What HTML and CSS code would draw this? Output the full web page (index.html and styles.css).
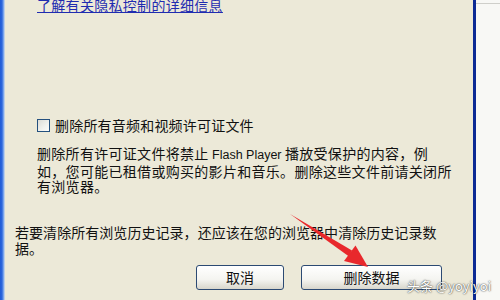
FILE: index.html
```html
<!DOCTYPE html>
<html>
<head>
<meta charset="utf-8">
<link rel="stylesheet" href="styles.css">
</head>
<body>
<div class="screen">
  <div class="edge-left"></div>
  <div class="dialog">
    <div class="group">
      <div class="link-row"><a class="link" href="#">了解有关隐私控制的详细信息</a></div>
      <label class="check-row"><span class="checkbox"></span><span>删除所有音频和视频许可证文件</span></label>
      <p class="note">删除所有许可证文件将禁止 <span class="latin">Flash Player</span> 播放受保护的内容，例<br>如，您可能已租借或购买的影片和音乐。删除这些文件前请关闭所<br>有浏览器。</p>
    </div>
    <p class="footer-note">若要清除所有浏览历史记录，还应该在您的浏览器中清除历史记录数<br>据。</p>
    <div class="buttons">
      <button class="btn btn-cancel">取消</button>
      <button class="btn btn-delete">删除数据</button>
    </div>
  </div>
  <div class="edge-dark"></div>
  <div class="side-pane"><div class="side-line"></div></div>

  <svg class="arrow" width="500" height="300" viewBox="0 0 500 300">
    <polygon points="290,214 352,250.5 349,256.5" fill="#e8282c"/>
    <polygon points="368,267 344,261 355.5,245.5" fill="#e8282c"/>
  </svg>
  <div class="watermark">头条 @yoyiyoi</div>
</div>
</body>
</html>
```

FILE: styles.css
```css
html, body {
  margin: 0;
  padding: 0;
}
body {
  width: 500px;
  height: 300px;
  overflow: hidden;
  font-family: "Noto Sans CJK SC", "Liberation Sans", sans-serif;
  font-size: 14px;
  color: #111;
}
.screen {
  position: relative;
  display: flex;
  width: 500px;
  height: 300px;
}
.edge-left {
  width: 5px;
  background: linear-gradient(to right, #1f5bd6 0, #2d66dc 2px, #7aa5ec 3.5px, #dfe4e6 5px);
}
.dialog {
  width: 468px;
  background: #ece9d8;
  padding-left: 10px;
  box-sizing: border-box;
  display: flex;
  flex-direction: column;
}
.group {
  padding-left: 22px;
}
.link-row {
  height: 16px;
  line-height: 16px;
  margin-top: -3px;
}
.link {
  color: #1f2cb0;
  text-decoration: underline;
  letter-spacing: 0.3px;
}
.check-row {
  display: flex;
  align-items: center;
  gap: 5px;
  height: 16px;
  margin-top: 104px;
  letter-spacing: 0.2px;
}
.checkbox {
  width: 13px;
  height: 13px;
  box-sizing: border-box;
  border: 1px solid #24507e;
  background: linear-gradient(135deg, #dcdcd6 0, #f2f2ee 60%, #fbfbfa 100%);
}
.note {
  margin: 13px 0 0 0;
  line-height: 15.5px;
  letter-spacing: 0.3px;
}
.latin {
  font-family: "Liberation Sans", sans-serif;
  font-size: 12.5px;
  letter-spacing: 0;
}
.footer-note {
  margin: 29px 0 0 0;
  line-height: 16px;
  letter-spacing: 0.05px;
}
.buttons {
  display: flex;
  justify-content: flex-end;
  gap: 17px;
  margin-top: 9px;
  padding-right: 31px;
}
.btn {
  height: 25px;
  border: 1px solid #2c4a73;
  border-radius: 3px;
  background: linear-gradient(to bottom, #ffffff 0, #f4f4f0 60%, #d8d6cc 100%);
  font-family: "Noto Sans CJK SC", sans-serif;
  font-size: 14px;
  color: #111;
  padding: 0;
  box-sizing: border-box;
}
.btn-cancel {
  width: 88px;
}
.btn-delete {
  width: 141px;
}
.edge-dark {
  width: 3px;
  background: #0c2a94;
}
.side-pane {
  flex: 1;
  background: #f8f8f5;
}
.side-line {
  margin-top: 3px;
  height: 1px;
  background: #cfcfca;
}
.arrow {
  position: absolute;
  left: 0;
  top: 0;
  pointer-events: none;
}
.watermark {
  position: absolute;
  left: 407px;
  top: 276px;
  color: #ffffff;
  font-size: 13px;
  text-shadow: 0 0 2px rgba(0,0,0,0.6), 0 0 1px rgba(0,0,0,0.6);
  white-space: nowrap;
}
```
